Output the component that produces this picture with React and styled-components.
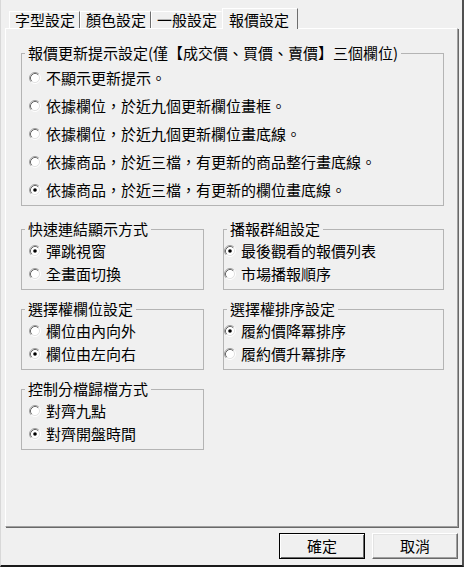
import React from 'react';
import styled, { createGlobalStyle } from 'styled-components';

const Global = createGlobalStyle`
  html, body { margin: 0; padding: 0; background: #f0f0f0; }
  body {
    font-family: "Noto Sans CJK TC", "Noto Sans CJK SC", sans-serif;
    font-size: 15px;
    color: #000;
  }
  * { box-sizing: border-box; }
`;

const Window = styled.div`
  width: 464px;
  height: 567px;
  display: flex;
  flex-direction: column;
  background: #f0f0f0;
  border-left: 1px solid #d8d8d8;
  border-right: 2px solid #505050;
  border-bottom: 2px solid #1a1a1a;
  padding: 0 4px;
`;

const TabBar = styled.div`
  height: 28px;
  display: flex;
  align-items: flex-end;
  padding-left: 4px;
`;

const Tab = styled.div`
  position: relative;
  z-index: ${p => (p.$selected ? 1 : 0)};
  height: ${p => (p.$selected ? 21 : 17)}px;
  margin-bottom: ${p => (p.$selected ? -1 : 0)}px;
  padding: ${p => (p.$selected ? '3px 8px 0 6px' : '0 4px 0 5px')};
  line-height: 16px;
  white-space: nowrap;
  background: #f0f0f0;
  border-top: 1px solid #fff;
  border-left: 1px solid #fff;
  border-right: 1px solid ${p => (p.$sep ? '#6e6e6e' : 'transparent')};
`;

const Panel = styled.div`
  flex: 1;
  border-top: 1px solid #fff;
  border-left: 1px solid #fff;
  border-right: 1px solid #a0a0a0;
  border-bottom: 1px solid #a0a0a0;
  box-shadow: 1px 1px 0 #696969;
  padding: 15px 13px 0 15px;
  display: flex;
  flex-direction: column;
  gap: 14px;
`;

const Columns = styled.div`
  display: grid;
  grid-template-columns: 183px 221px;
  column-gap: 19px;
  row-gap: 10px;
  align-items: start;
`;

const Group = styled.fieldset`
  margin: 0;
  padding: 0;
  min-width: 0;
  border: 1px solid #b4b4b4;
`;

const Legend = styled.legend`
  margin-left: 3px;
  padding: 0 3px;
  line-height: 18px;
  font-size: 15px;
`;

const Body = styled.div`
  padding: ${p => p.$pt}px 0 ${p => p.$pb}px ${p => p.$pl}px;
`;

const Option = styled.div`
  display: flex;
  align-items: center;
  height: ${p => p.$h}px;
  line-height: 18px;
  white-space: nowrap;
`;

const RadioIcon = styled.svg`
  flex: none;
  width: 12px;
  height: 12px;
  margin-right: 5px;
`;

function Radio({ checked }) {
  return (
    <RadioIcon viewBox="0 0 12 12">
      <circle cx="6" cy="6" r="4.5" fill="#fff" />
      <path d="M2.11 9.89 A5.5 5.5 0 0 1 9.89 2.11" fill="none" stroke="#a0a0a0" strokeWidth="1" />
      <path d="M2.11 9.89 A5.5 5.5 0 0 0 9.89 2.11" fill="none" stroke="#ffffff" strokeWidth="1" />
      <path d="M2.82 9.18 A4.5 4.5 0 0 1 9.18 2.82" fill="none" stroke="#696969" strokeWidth="1" />
      <path d="M2.82 9.18 A4.5 4.5 0 0 0 9.18 2.82" fill="none" stroke="#e3e3e3" strokeWidth="1" />
      {checked && <circle cx="6" cy="6" r="1.8" fill="#000" />}
    </RadioIcon>
  );
}

const Footer = styled.div`
  height: 38px;
  display: flex;
  justify-content: flex-end;
  align-items: flex-start;
  gap: 7px;
  padding-top: 6px;
`;

const Button = styled.button`
  width: 86px;
  height: 26px;
  padding: 0;
  font-family: inherit;
  font-size: 15px;
  line-height: 18px;
  color: #000;
  background: #f0f0f0;
  border: 1px solid;
  border-color: ${p => (p.$default ? '#000' : '#fff #696969 #696969 #fff')};
  box-shadow: ${p =>
    p.$default
      ? 'inset 1px 1px 0 #fff, inset -1px -1px 0 #696969'
      : 'inset -1px -1px 0 #a0a0a0, inset 1px 1px 0 #e3e3e3'};
`;

function RadioGroup({ title, items, checked, h, pt, pb, pl }) {
  return (
    <Group>
      <Legend>{title}</Legend>
      <Body $pt={pt} $pb={pb} $pl={pl}>
        {items.map((t, i) => (
          <Option key={i} $h={h}>
            <Radio checked={i === checked} />
            <span>{t}</span>
          </Option>
        ))}
      </Body>
    </Group>
  );
}

export default function App() {
  return (
    <>
      <Global />
      <Window>
        <TabBar>
          <Tab $sep>字型設定</Tab>
          <Tab $sep>顏色設定</Tab>
          <Tab>一般設定</Tab>
          <Tab $selected $sep>報價設定</Tab>
        </TabBar>
        <Panel>
          <RadioGroup
            title="報價更新提示設定(僅【成交價、買價、賣價】三個欄位)"
            items={[
              '不顯示更新提示。',
              '依據欄位，於近九個更新欄位畫框。',
              '依據欄位，於近九個更新欄位畫底線。',
              '依據商品，於近三檔，有更新的商品整行畫底線。',
              '依據商品，於近三檔，有更新的欄位畫底線。',
            ]}
            checked={4}
            h={28}
            pt={2}
            pb={1}
            pl={7}
          />
          <Columns>
            <RadioGroup title="快速連結顯示方式" items={['彈跳視窗', '全畫面切換']} checked={0} h={23} pt={1} pb={4} pl={7} />
            <RadioGroup title="播報群組設定" items={['最後觀看的報價列表', '市場播報順序']} checked={0} h={23} pt={1} pb={4} pl={0} />
            <RadioGroup title="選擇權欄位設定" items={['欄位由內向外', '欄位由左向右']} checked={1} h={23} pt={1} pb={4} pl={7} />
            <RadioGroup title="選擇權排序設定" items={['履約價降冪排序', '履約價升冪排序']} checked={0} h={23} pt={1} pb={4} pl={0} />
            <RadioGroup title="控制分檔歸檔方式" items={['對齊九點', '對齊開盤時間']} checked={1} h={23} pt={1} pb={4} pl={7} />
          </Columns>
        </Panel>
        <Footer>
          <Button $default>確定</Button>
          <Button>取消</Button>
        </Footer>
      </Window>
    </>
  );
}
